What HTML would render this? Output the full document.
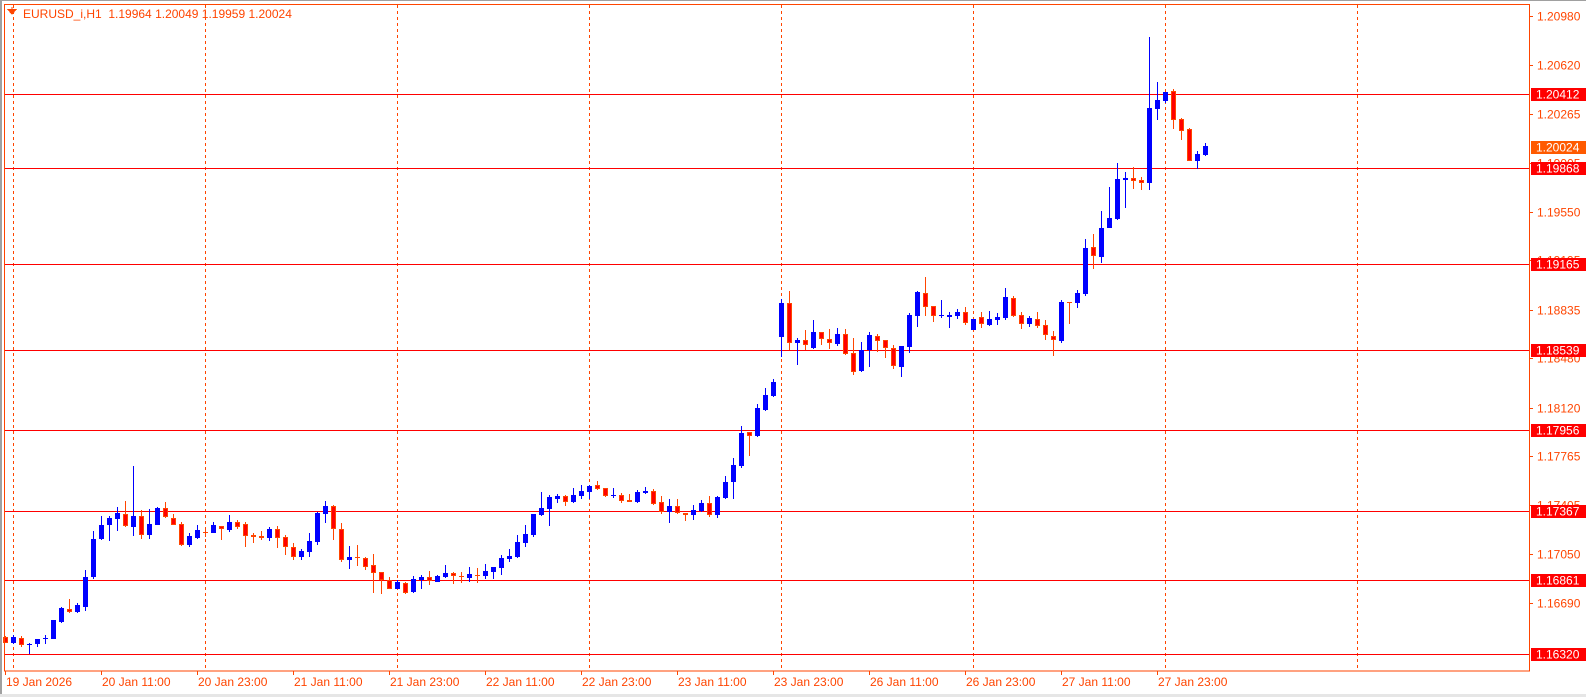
<!DOCTYPE html>
<html><head><meta charset="utf-8"><style>
html,body{margin:0;padding:0;background:#fff;width:1586px;height:697px;overflow:hidden}
svg{display:block}
text{font-family:"Liberation Sans",Tahoma,sans-serif;font-size:12px}
</style></head><body>
<svg id="s" width="1586" height="697" xmlns="http://www.w3.org/2000/svg" shape-rendering="crispEdges">
<rect x="0" y="0" width="1586" height="697" fill="#fff"/>
<rect x="0" y="0" width="1586" height="1" fill="#a0a0a0"/>
<rect x="0" y="0" width="2" height="697" fill="#a0a0a0"/>
<rect x="0" y="694" width="1586" height="3" fill="#e6e6e6"/>
<g id="grid"></g>
<g id="hl"></g>
<g id="candles"></g>
<rect x="4.5" y="4.5" width="1525" height="666.5" fill="none" stroke="#ff4500" stroke-width="1"/>
<g id="axis"></g>
<path d="M7 9 L17 9 L12 15 Z" fill="#ff4500"/>
<rect x="11.5" y="7" width="1" height="2" fill="#ff4500"/>
<text x="23" y="18" fill="#ff4500">EURUSD_i,H1 &#160;1.19964 1.20049 1.19959 1.20024</text>
</svg>
<script>
var NS="http://www.w3.org/2000/svg";
function el(p,t,a,txt){var e=document.createElementNS(NS,t);for(var k in a)e.setAttribute(k,a[k]);if(txt)e.textContent=txt;document.getElementById(p).appendChild(e);return e;}
for(var k=0;k<8;k++){var x=13.5+192*k;el("grid","line",{x1:x,y1:5,x2:x,y2:671,stroke:"#ff4500","stroke-dasharray":"3,3","stroke-width":1});}
function py(p){return 93.7+(1.20412-p)*13693;}
var H=[1.20412,1.19868,1.19165,1.18539,1.17956,1.17367,1.16861,1.16320];
H.forEach(function(p){var y=Math.round(py(p))+0.5;el("hl","line",{x1:5,y1:y,x2:1529,y2:y,stroke:"#ff0000","stroke-width":1});});
var L=[1.20980,1.20620,1.20265,1.19905,1.19550,1.19195,1.18835,1.18480,1.18120,1.17765,1.17405,1.17050,1.16690];
L.forEach(function(p){var y=Math.round(py(p));el("axis","rect",{x:1530,y:y,width:3,height:1,fill:"#ff4500"});el("axis","text",{x:1537,y:y+4.5,fill:"#ff4500"},p.toFixed(5));});
H.forEach(function(p){var y=Math.round(py(p));el("axis","rect",{x:1531,y:y-6,width:55,height:13,fill:"#ff0000"});el("axis","text",{x:1536,y:y+4.5,fill:"#fff"},p.toFixed(5));});
(function(){var y=Math.round(py(1.20024));el("axis","rect",{x:1531,y:y-6,width:55,height:13,fill:"#ff5a00"});el("axis","text",{x:1536,y:y+4.5,fill:"#fff"},"1.20024");})();
var T=["19 Jan 2026","20 Jan 11:00","20 Jan 23:00","21 Jan 11:00","21 Jan 23:00","22 Jan 11:00","22 Jan 23:00","23 Jan 11:00","23 Jan 23:00","26 Jan 11:00","26 Jan 23:00","27 Jan 11:00","27 Jan 23:00"];
T.forEach(function(t,k){var x=5+96*k;el("axis","rect",{x:x,y:671,width:1,height:4,fill:"#ff4500"});el("axis","text",{x:x+1,y:686,fill:"#ff4500"},t);});
var S=[
[450,[
[-1,'r',562,578,558,580],[0,'b',561,578,556,581],[1,'r',565,586,558,592],[2,'b',581,586,578,612],[3,'b',568,581,568,590],[4,'b',565,567,555,582],[5,'b',510,566,510,566],[6,'b',474,515,470,518],[7,'r',478,486,447,489],[8,'b',465,485,459,490],[9,'b',381,470,360,482],[10,'b',267,381,243,386],[11,'b',225,267,198,270],[12,'b',204,224,198,272],[13,'b',189,206,171,242],[14,'r',192,228,153,231],[15,'b',198,230,48,258],[16,'r',198,254,181,268],[17,'b',222,254,177,267],[18,'b',174,224,171,224],[19,'r',174,202,156,205],[20,'r',204,224,193,226],[21,'r',222,285,216,287],[22,'b',258,285,249,290],[23,'b',240,263,225,266],[24,'r',245,247,231,260],[25,'b',225,248,216,248],[26,'r',228,238,228,269],[27,'b',216,239,195,245],[28,'r',216,230,210,236],[29,'r',222,257,216,290],[30,'r',255,260,250,278],[31,'r',258,263,242,269],[32,'b',237,263,230,272],[33,'r',237,263,228,293],[34,'r',261,290,255,314],[35,'r',291,320,279,329],[36,'b',303,320,297,329],[37,'b',273,305,249,320],[38,'b',188,275,185,284],[39,'b',168,191,153,218],[40,'r',168,236,165,269],[41,'r',237,329,218,335],[42,'b',321,329,288,356],[43,'r',321,323,285,347],[44,'r',324,350,321,359],[45,'r',345,368,311,428],[46,'r',366,390,366,431],[47,'r',391,416,380,416],[48,'b',396,416,390,418]
]],
[270,[
[49,'r',938,970,936,973],[50,'b',927,966,918,969],[51,'b',921,931,915,956],[52,'r',921,934,903,946],[53,'b',918,935,915,935],[54,'b',909,921,885,923],[55,'r',909,919,906,941],[56,'r',917,922,906,938],[57,'b',912,923,891,935],[58,'r',914,916,894,938],[59,'b',903,917,882,926],[60,'b',891,905,891,928],[61,'b',864,893,855,914],[62,'b',857,866,837,875],[63,'b',816,860,795,863],[64,'b',792,818,765,830],[65,'b',732,795,732,800],[66,'b',714,735,666,738],[67,'b',681,716,675,768],[68,'b',678,686,672,698],[69,'r',678,695,675,708],[70,'b',675,695,654,698],[71,'b',663,677,645,686],[72,'b',648,665,645,687],[73,'r',645,656,633,659],[74,'r',654,677,654,680],[75,'b',675,678,654,683],[76,'r',675,692,669,698],[77,'r',690,695,672,697],[78,'b',666,697,660,699],[79,'b',663,669,651,672],[80,'r',663,701,657,704],[81,'r',696,725,678,731],[82,'b',708,725,687,758],[83,'r',708,728,687,731],[84,'r',729,734,729,752],[85,'b',720,735,705,749],[86,'b',699,723,690,725],[87,'r',699,734,678,740],[88,'b',681,734,678,744],[89,'b',636,684,618,686],[90,'b',585,636,564,687],[91,'b',489,588,468,593],[92,'r',486,497,486,557],[93,'b',414,498,402,500],[94,'b',375,420,354,423],[95,'b',336,378,327,381],[96,'b',99,201,87,261],[97,'r',99,218,63,241],[98,'b',210,218,204,285]
]],
[260,[
[99,'r',240,256,210,270],[100,'b',216,263,180,266],[101,'r',216,236,216,254],[102,'r',237,250,207,266],[103,'b',222,252,204,257],[104,'r',222,281,207,284],[105,'r',279,335,234,344],[106,'b',270,332,246,335],[107,'b',225,270,216,320],[108,'r',228,242,222,275],[109,'r',240,263,240,293],[110,'r',263,317,255,328],[111,'b',258,320,258,350],[112,'b',165,262,160,278],[113,'b',96,167,93,200],[114,'r',99,140,51,167],[115,'r',138,167,138,185],[116,'b',165,168,120,173],[117,'b',165,171,156,204],[118,'b',156,167,147,176],[119,'r',156,188,141,194],[120,'b',177,210,177,210],[121,'r',171,191,156,203],[122,'b',177,195,153,197],[123,'b',171,180,159,194],[124,'b',111,173,84,181],[125,'r',114,168,108,171],[126,'r',165,191,156,207],[127,'b',174,191,168,200],[128,'r',177,197,156,203]
]],
[30,[
[129,'r',885,916,870,931],[130,'r',918,931,903,977],[131,'b',816,934,810,940],[132,'r',815,818,815,881],[133,'b',789,818,780,833],[134,'b',654,791,627,797],[135,'r',651,677,612,716],[136,'b',594,680,543,698],[137,'b',564,593,471,593],[138,'b',447,568,399,571],[139,'b',444,449,426,533],[140,'r',444,452,411,476],[141,'r',450,458,441,479],[142,'b',234,458,21,479],[143,'b',210,236,156,269],[144,'b',186,212,186,218],[145,'r',183,269,177,296],[146,'r',267,302,264,329],[147,'r',297,392,294,392],[148,'b',372,392,363,416],[149,'b',348,374,339,377]
]]];
S.forEach(function(seg){var y0=seg[0];seg[1].forEach(function(c){
 var cx=13+8*c[0];var bt=Math.round(y0+c[2]/3),bb=Math.round(y0+c[3]/3),wt=Math.round(y0+c[4]/3),wb=Math.round(y0+c[5]/3);
 if(bb<=bt)bb=bt+1;
 var col=c[1]=='b'?'#0000ff':'#ff4500';
 el("candles","rect",{x:cx,y:wt,width:1,height:Math.max(1,wb-wt),fill:col});
 if(c[1]=='b'){el("candles","rect",{x:cx-2,y:bt,width:5,height:bb-bt,fill:'#0000ff'});}
 else{ if(bb-bt<=2){el("candles","rect",{x:cx-2,y:bt,width:5,height:Math.max(1,bb-bt),fill:'#ff4500'});}
  else{el("candles","rect",{x:cx-2,y:bt,width:5,height:bb-bt,fill:'#ff4500'});el("candles","rect",{x:cx-1,y:bt+1,width:3,height:bb-bt-2,fill:'#ff0000'});}}
});});
</script>
</body></html>
